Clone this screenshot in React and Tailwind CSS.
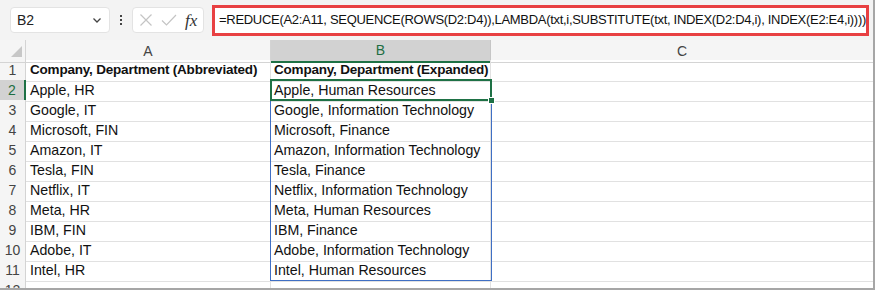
import React from 'react';

const rows = [
  ['Company, Department (Abbreviated)', 'Company, Department (Expanded)'],
  ['Apple, HR', 'Apple, Human Resources'],
  ['Google, IT', 'Google, Information Technology'],
  ['Microsoft, FIN', 'Microsoft, Finance'],
  ['Amazon, IT', 'Amazon, Information Technology'],
  ['Tesla, FIN', 'Tesla, Finance'],
  ['Netflix, IT', 'Netflix, Information Technology'],
  ['Meta, HR', 'Meta, Human Resources'],
  ['IBM, FIN', 'IBM, Finance'],
  ['Adobe, IT', 'Adobe, Information Technology'],
  ['Intel, HR', 'Intel, Human Resources'],
  ['', ''],
];

const formula =
  '=REDUCE(A2:A11, SEQUENCE(ROWS(D2:D4)),LAMBDA(txt,i,SUBSTITUTE(txt, INDEX(D2:D4,i), INDEX(E2:E4,i))))';

function Toolbar() {
  return (
    <div className="flex items-center h-[40px] bg-[#f3f3f3] pl-[10px] pr-[4px]">
      {/* Name box */}
      <div className="flex items-center justify-between w-[100px] h-[26px] bg-white rounded-[4px] border border-[#e3e3e3] pl-[6px] pr-[6px]">
        <span className="text-[14px] text-[#222]">B2</span>
        <svg className="w-[12px] h-[12px] text-[#444]" viewBox="0 0 12 12" fill="none" stroke="currentColor" strokeWidth="1.3">
          <path d="M2.5 4.5 6 8l3.5-3.5" />
        </svg>
      </div>
      {/* dots */}
      <div className="flex flex-col items-center gap-[2px] w-[22px]">
        <span className="w-[2px] h-[2px] bg-[#444]" />
        <span className="w-[2px] h-[2px] bg-[#444]" />
        <span className="w-[2px] h-[2px] bg-[#444]" />
      </div>
      {/* fx box */}
      <div className="flex items-center w-[72px] h-[26px] bg-white rounded-[4px] border border-[#e3e3e3] pl-[6px] gap-[8px]">
        <svg className="w-[14px] h-[14px]" viewBox="0 0 14 14" fill="none" stroke="#c4c4c4" strokeWidth="1.2">
          <path d="M1.5 1.5l11 11M12.5 1.5l-11 11" />
        </svg>
        <svg className="w-[16px] h-[14px]" viewBox="0 0 16 14" fill="none" stroke="#c4c4c4" strokeWidth="1.2">
          <path d="M1 7.5l4.5 4.5L15 2" />
        </svg>
        <span className="text-[17px] italic text-[#333] leading-none" style={{ fontFamily: '"Liberation Serif", serif' }}>
          fx
        </span>
      </div>
      {/* formula bar */}
      <div className="ml-[8px] flex items-center flex-1 h-[31px] bg-white border-[3px] border-[#e84042] pl-[4px] overflow-hidden whitespace-nowrap">
        <span className="text-[13px] text-[#111] tracking-[-0.3px]">{formula}</span>
      </div>
    </div>
  );
}

function Sheet() {
  const cols = 'grid grid-cols-[26px_245px_220px_1fr]';
  return (
    <div className="relative">
      {/* column headers */}
      <div className={`${cols} h-[20px] bg-[#f5f5f5] text-[14px] text-[#444]`}>
        <div className="relative border-r border-[#d4d4d4] border-b border-b-[#d4d4d4]">
          <svg className="absolute left-[11px] top-[6px] w-[11px] h-[11px]" viewBox="0 0 11 11">
            <path d="M11 0v11H0z" fill="#c7c7c7" />
          </svg>
        </div>
        <div className="flex items-center justify-center border-r border-[#d4d4d4] border-b border-b-[#d4d4d4]">A</div>
        <div className="flex items-center justify-center bg-[#d2d2d2] border-r border-[#c6c6c6] border-b-2 border-b-[#1e7145] text-[#1e6e42]">B</div>
        <div className="flex items-center justify-center border-b border-[#d4d4d4]">C</div>
      </div>
      {rows.map((r, i) => {
        const sel = i === 1;
        return (
          <div key={i} className={`${cols} h-[20px] text-[14.2px] text-[#111]`}>
            <div
              className={`flex items-center justify-center text-[14px] border-b border-[#d8d8d8] ${
                sel
                  ? 'bg-[#d2d2d2] text-[#1e6e42] border-r-2 border-r-[#1e7145]'
                  : 'bg-[#f5f5f5] text-[#444] border-r border-r-[#d4d4d4]'
              }`}
            >
              {i + 1}
            </div>
            <div
              className={`flex items-center pl-[4px] border-r border-b border-[#e1e1e1] whitespace-nowrap ${
                i === 0 ? 'font-bold text-[13.5px] tracking-[-0.2px]' : ''
              }`}
            >
              {r[0]}
            </div>
            <div
              className={`flex items-center pl-[3px] border-r border-b border-[#e1e1e1] whitespace-nowrap ${
                i === 0 ? 'font-bold text-[13.5px] tracking-[-0.2px]' : ''
              }`}
            >
              {r[1]}
            </div>
            <div className="border-b border-[#e1e1e1]" />
          </div>
        );
      })}
      {/* spill range border B2:B11 */}
      <div className="absolute left-[270px] top-[40px] w-[222px] h-[201px] border border-[#3f6fc4] pointer-events-none" />
      {/* active cell B2 */}
      <div className="absolute left-[270px] top-[39px] w-[222px] h-[22px] border-2 border-[#1e7145] pointer-events-none" />
      <div className="absolute left-[488px] top-[57px] w-[7px] h-[7px] bg-[#1e7145] border border-white pointer-events-none" />
    </div>
  );
}

export default function App() {
  return (
    <div
      className="w-[875px] h-[290px] overflow-hidden bg-white border-r-2 border-b-2 border-[#a6a6a6]"
      style={{ fontFamily: '"Liberation Sans", Arial, sans-serif' }}
    >
      <Toolbar />
      <Sheet />
    </div>
  );
}
